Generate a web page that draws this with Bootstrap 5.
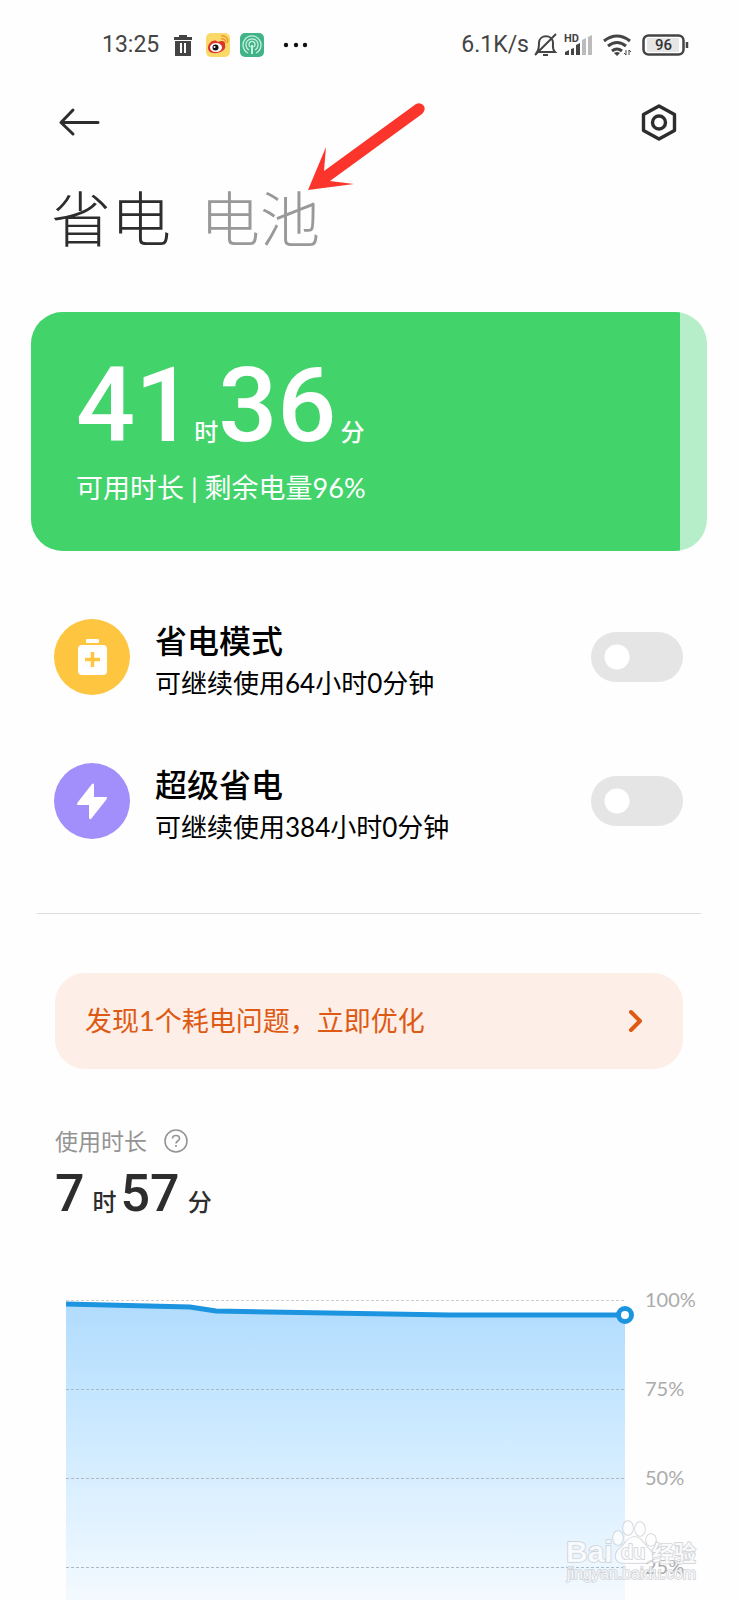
<!DOCTYPE html>
<html lang="zh-CN">
<head>
<meta charset="utf-8">
<meta name="viewport" content="width=device-width, initial-scale=1">
<title>省电与电池</title>
<link href="https://cdn.jsdelivr.net/npm/bootstrap@5.3.0/dist/css/bootstrap.min.css" rel="stylesheet">
<style>
  body { font-family: Lato, "Noto Sans CJK SC", sans-serif; background: #fefefe; color: #000; overflow-x: hidden; }
  svg { display: block; flex: none; }
  .status { padding: 26px 48px 0 102px; height: 64px; font-family: Roboto, sans-serif; font-size: 23px; line-height: 40px; color: #444; }
  .status .time { width: 72px; }
  .topbar { padding: 36px 60px 0 58px; }
  .titles { padding: 35px 51px 0; gap: 29px; }
  .titles a { font-size: 60px; line-height: 80px; font-weight: 300; color: #2d2d2d; text-decoration: none; }
  .titles a.other { color: #999; }
  .pointer { left: 304px; top: 100px; }
  .charge { margin: 53px 31px 0; height: 239px; border-radius: 32px; background: #b6eec9; color: #fff; overflow: hidden; }
  .charge-fill { background: #42d36b; padding: 40px 45px 0; }
  .num-big { font-family: Roboto, sans-serif; font-size: 104px; line-height: 108px; font-weight: 500; }
  .unit { font-size: 24px; font-weight: 500; }
  .charge-note { font-size: 27px; line-height: 40px; margin-top: 8px; }
  .modes { padding: 60px 55px 0 54px; gap: 52px; }
  .disc { width: 76px; height: 76px; }
  .mode-text { margin-left: 25px; padding-top: 8px; }
  .mode-name { font-size: 32px; line-height: 44px; font-weight: 500; }
  .mode-sub { font-size: 26px; line-height: 40px; }
  .modes .form-check-input { width: 92px; height: 50px; margin: 0; border: 0; background-color: #e5e5e5;
    background-image: radial-gradient(circle at 26px 25px, #fff 12px, transparent 13px); background-position: 0 0; background-size: 100% 100%; }
  .rule { margin: 66px 37px 0; border-top: 1px solid #dcdcdc; }
  .notice { margin: 59px 55px 0; height: 96px; padding: 0 40px 0 30px; border-radius: 30px; background: #fdeee7; color: #de5a14; font-size: 27px; }
  .usage { padding: 54px 55px 0; color: #2d2d2d; }
  .usage-label { font-size: 23px; line-height: 36px; color: #949494; gap: 17px; }
  .num-mid { font-family: Roboto, sans-serif; font-size: 52px; line-height: 70px; font-weight: 500; }
  .battery-chart { margin: 59px 38px 0 66px; height: 312px; }
  .plot { flex: 1 1 0; min-width: 0; }
  .plot svg { width: 100%; height: 312px; overflow: visible; }
  .knob { right: -9px; top: 18px; width: 18px; height: 18px; border-radius: 50%; border: 5px solid #1c94e0; background: #fff; }
  .scale { width: 75px; padding-left: 20px; font-size: 20px; color: #ababab; }
  .scale span { height: 89px; line-height: 22px; flex: none; }
  .scale span:last-child { height: 22px; }
  .watermark { right: 36px; bottom: 13px; width: 138px; opacity: .85; }
</style>
</head>
<body>
<div class="position-relative">
  <header>
    <div class="status d-flex align-items-center">
      <span class="time">13:25</span>
      <svg width="18" height="21" viewBox="0 0 18 21"><path fill="#444" fill-rule="evenodd" d="M5 0h8v2h5v3H0V2h5zM1 6h16v15H1zM6 8v10h2V8zm4 0v10h2V8z"/></svg>
      <svg style="margin-left:14px" width="24" height="24" viewBox="0 0 24 24"><rect width="24" height="24" rx="5" fill="#fbd968"/><path d="M2 15C2 9 9 5 12 9c4-2 8-1 7 3 3 8-17 12-17 3" fill="#d9352c"/><ellipse cx="10" cy="14.500" rx="6" ry="4.500" fill="#fff"/><circle cx="9.500" cy="14.500" r="3" fill="#111"/><circle cx="8.500" cy="14" r="1" fill="#fff"/><path d="M15 6c3-1 5 1 4 4M15 3c5-1 8 3 6 7" fill="none" stroke="#ef9a31" stroke-width="1.500"/></svg>
      <svg style="margin-left:10px" width="24" height="24" viewBox="0 0 24 24"><rect width="24" height="24" rx="5" fill="#40b488"/><g fill="none" stroke="#c9f1e0" stroke-width="1.300"><path d="M8 20a9 9 0 1 1 8 0M9 17a6 6 0 1 1 6 0M10.500 14a3 3 0 1 1 3 0"/><path d="M12 12v9" stroke-width="2"/></g></svg>
      <svg style="margin-left:19px" width="26" height="6" viewBox="0 0 26 6"><g fill="#111"><circle cx="3" cy="3" r="2.200"/><circle cx="13" cy="3" r="2.200"/><circle cx="22" cy="3" r="2.200"/></g></svg>
      <span class="ms-auto">6.1K/s</span>
      <svg style="margin-left:5px" width="24" height="24" viewBox="0 0 24 24" fill="none" stroke="#444" stroke-width="2"><path d="M3 19h18c-3-3-2-5-2-9 0-9-14-9-14 0 0 4 0 6-2 9zM1 22 22 1"/><path d="M9 22h5"/></svg>
      <svg style="margin-left:6px" width="30" height="24" viewBox="0 0 30 24"><text x="0" y="9" font-size="11" font-weight="700" fill="#444">HD</text><path fill="#444" d="M1 22v-3l4-2v5zM7 22v-6l3-1v7zM12 22V12l4-2v12z"/><path fill="#bbb" d="M18 22V7l4-2v17zM24 22V4l4-2v20z"/></svg>
      <svg style="margin-left:9px" width="30" height="24" viewBox="0 0 30 24"><g fill="none" stroke="#444" stroke-width="3"><path d="M1 8q13-10 26 0M5 13q9-7 18 0M9 18q5-4 10 0"/></g><path d="m11 20 3 3 3-3q-3-2-6 0" fill="#444"/><path d="M23 17v5l-2-2M26 22v-5l2 2" fill="none" stroke="#444"/></svg>
      <svg style="margin-left:9px" width="48" height="22" viewBox="0 0 48 22"><rect x="1.500" y="1.500" width="40" height="19" rx="5" fill="#fff" stroke="#444" stroke-width="2.500"/><rect x="5" y="4" width="32" height="14" fill="#e6e6e6"/><path d="M45 8v6" stroke="#444" stroke-width="2.500"/><text x="21.500" y="16" text-anchor="middle" font-size="15" font-weight="500" fill="#333">96</text></svg>
    </div>
    <nav class="topbar d-flex justify-content-between align-items-center">
      <button class="btn p-0 border-0" aria-label="返回"><svg width="42" height="44" viewBox="0 0 42 44"><path d="M15 10 3 22.500 15 34M3 22.500h37" fill="none" stroke="#2d2d2d" stroke-width="3" stroke-linecap="round" stroke-linejoin="round"/></svg></button>
      <button class="btn p-0 border-0" aria-label="设置"><svg width="38" height="44" viewBox="0 0 38 44"><g fill="none" stroke="#2d2d2d" stroke-width="3.400" stroke-linejoin="round"><path d="m19 6 15.500 8.500v16L19 39 3.500 30.500v-16z"/><circle cx="19" cy="22.500" r="6.500"/></g></svg></button>
    </nav>
    <div class="titles d-flex"><a href="#save">省电</a><a href="#battery" class="other">电池</a></div>
  </header>
  <svg class="pointer position-absolute" width="122" height="94" viewBox="0 0 122 94"><path fill="#fb352b" d="M4 90 22 47l-2 24L112 4q5-2 8 2 2 4-2 8L26 81l24 3z"/></svg>

  <main>
    <section class="charge">
      <div class="charge-fill h-100" style="width:96%">
        <div class="d-flex align-items-baseline"><span class="num-big">41</span><span class="unit">时</span><span class="num-big">36</span><span class="unit ms-1">分</span></div>
        <div class="charge-note">可用时长 | 剩余电量96%</div>
      </div>
    </section>

    <section class="modes d-flex flex-column" id="save">
      <div class="d-flex align-items-center">
        <svg class="disc" viewBox="0 0 76 76"><circle cx="38" cy="38" r="38" fill="#fdc540"/><rect x="32" y="20" width="13" height="4" rx="1" fill="#fff"/><rect x="24" y="26" width="29" height="30" rx="4" fill="#fff"/><path d="M38.500 33v15M31 40.500h15" stroke="#fdc540" stroke-width="3.500"/></svg>
        <label class="mode-text" for="saver"><span class="mode-name d-block">省电模式</span><span class="mode-sub d-block">可继续使用64小时0分钟</span></label>
        <input class="form-check-input ms-auto rounded-pill" type="checkbox" role="switch" id="saver">
      </div>
      <div class="d-flex align-items-center">
        <svg class="disc" viewBox="0 0 76 76"><circle cx="38" cy="38" r="38" fill="#a28ffb"/><path d="M40 21v13h12q2 0 0 3L37 56q-2 1-2-2V42H24q-2 0 0-3l14-18q2-1 2 0" fill="#fff"/></svg>
        <label class="mode-text" for="ultra"><span class="mode-name d-block">超级省电</span><span class="mode-sub d-block">可继续使用384小时0分钟</span></label>
        <input class="form-check-input ms-auto rounded-pill" type="checkbox" role="switch" id="ultra">
      </div>
    </section>

    <div class="rule"></div>

    <a href="#battery" class="notice d-flex align-items-center justify-content-between text-decoration-none">
      <span>发现1个耗电问题，立即优化</span>
      <svg width="16" height="24" viewBox="0 0 16 24"><path d="m4 3 9 9-9 9" fill="none" stroke="#de5a14" stroke-width="4" stroke-linecap="round" stroke-linejoin="round"/></svg>
    </a>

    <section class="usage" id="battery">
      <div class="usage-label d-flex align-items-center"><span>使用时长</span>
        <svg width="24" height="24" viewBox="0 0 24 24" fill="none" stroke="#949494" stroke-width="1.600"><circle cx="12" cy="12" r="11"/><path d="M8.500 9.500c0-4 7-4 7 0 0 2.500-3.500 2.500-3.500 5M12 16v2"/></svg>
      </div>
      <div class="d-flex align-items-baseline"><span class="num-mid">7</span><span class="unit ms-2 me-1">时</span><span class="num-mid">57</span><span class="unit ms-2">分</span></div>
    </section>

    <section class="battery-chart d-flex">
      <div class="plot position-relative">
        <svg viewBox="0 0 559 312" preserveAspectRatio="none">
          <defs><linearGradient id="sky" x1="0" y1="0" x2="0" y2="1"><stop offset="0" stop-color="#b1dbfd"/><stop offset=".3" stop-color="#c4e6ff"/><stop offset=".65" stop-color="#dcf0ff"/><stop offset="1" stop-color="#f4faff"/></linearGradient></defs>
          <path d="M0 16 124 19l26 4 234 4h175v285H0z" fill="url(#sky)"/>
          <path d="M0 12.500h559" stroke="#d3cdc9" stroke-dasharray="3 2"/>
          <path d="M0 101.500h559M0 190.500h559M0 279.500h559" stroke="#a9bac4" stroke-dasharray="3 2"/>
          <path d="M0 16 124 19l26 4 234 4h175" fill="none" stroke="#1c94e0" stroke-width="5"/>
        </svg>
        <span class="knob position-absolute"></span>
      </div>
      <div class="scale d-flex flex-column"><span>100%</span><span>75%</span><span>50%</span><span>25%</span></div>
    </section>
  </main>

  <svg class="watermark position-absolute" height="68" viewBox="0 0 138 68">
    <g fill="#fff" fill-opacity=".85" stroke="#c9ccd0" stroke-width="1.500" paint-order="stroke">
      <text x="2" y="43" font-family="Liberation Sans" font-size="30" font-weight="700">Bai</text>
      <ellipse cx="54" cy="19" rx="5" ry="7"/><ellipse cx="64" cy="9" rx="5" ry="7"/><ellipse cx="76" cy="10" rx="5" ry="7"/><ellipse cx="87" cy="21" rx="5" ry="6"/>
      <path d="M70 18c8 0 10 8 16 13 7 9 0 14-7 13H60c-9 0-11-8-5-14 6-4 8-12 15-12z"/>
      <text x="57" y="40" font-family="Liberation Sans" font-size="20" font-weight="700">du</text>
      <text x="88" y="42" font-size="22" font-weight="700">经验</text>
      <text x="3" y="60" font-family="Liberation Sans" font-size="16">jingyan.baidu.com</text>
    </g>
  </svg>
</div>
<script src="https://cdn.jsdelivr.net/npm/bootstrap@5.3.0/dist/js/bootstrap.bundle.min.js"></script>
</body>
</html>
